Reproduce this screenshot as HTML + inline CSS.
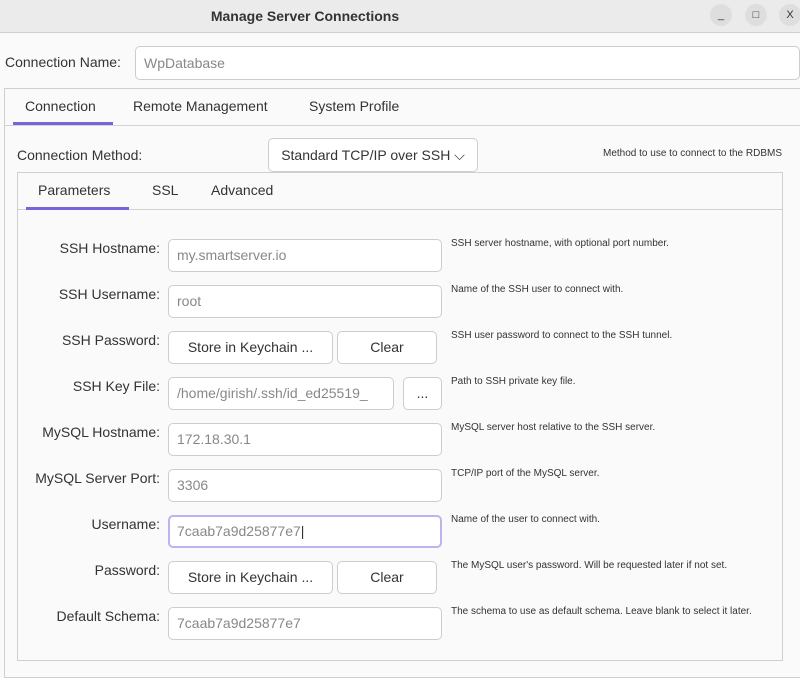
<!DOCTYPE html><html><head><style>
*{box-sizing:border-box}body{margin:0;width:800px;height:675px;background:#fafafa;font-family:"Liberation Sans",sans-serif;color:#333;position:relative;overflow:hidden;font-size:14px}
.a{position:absolute}
.tb{left:0;top:0;width:800px;height:33px;background:#ebebeb;border-bottom:1px solid #cfcfcf}
.c{width:22px;height:22px;border-radius:11px;background:#dedede;top:4px;font-size:11px;text-align:center;line-height:22px;color:#333}
.in{background:#fff;border:1px solid #cdcdcd;border-radius:5px;height:33px;color:#888;padding-left:8px;line-height:31px;font-size:14px}
.bt{background:#fff;border:1px solid #cdcdcd;border-radius:5px;height:33px;text-align:center;line-height:31px;color:#333}
.lb{right:640px;text-align:right;white-space:nowrap}
.d{left:451px;font-size:10px;color:#333;white-space:nowrap}
.u{height:3px;background:#7764d8}
</style></head><body>
<div class="a tb"></div>
<div class="a" style="left:0;width:610px;top:8px;text-align:center;font-weight:bold;font-size:14px">Manage Server Connections</div>
<div class="a c" style="left:710px">_</div><div class="a c" style="left:745px">□</div><div class="a c" style="left:779px">X</div>
<div class="a" style="left:5px;top:54px">Connection Name:</div>
<div class="a in" style="left:135px;top:46px;width:665px;height:34px;line-height:32px">WpDatabase</div>
<div class="a" style="left:4px;top:88px;width:800px;height:590px;border:1px solid #cfcfcf;border-right:none"></div>
<div class="a" style="left:4px;top:125px;width:796px;border-top:1px solid #d3d3d3"></div>
<div class="a" style="left:25px;top:98px">Connection</div>
<div class="a" style="left:133px;top:98px">Remote Management</div>
<div class="a" style="left:309px;top:98px">System Profile</div>
<div class="a u" style="left:13px;top:122px;width:100px"></div>
<div class="a" style="left:17px;top:147px">Connection Method:</div>
<div class="a bt" style="left:268px;top:138px;width:210px;height:34px;line-height:32px">Standard TCP/IP over SSH ⌵</div>
<div class="a" style="right:18px;top:148px;font-size:10px">Method to use to connect to the RDBMS</div>
<div class="a" style="left:17px;top:172px;width:766px;height:489px;border:1px solid #cfcfcf;background:#fafafa"></div>
<div class="a" style="left:18px;top:209px;width:764px;border-top:1px solid #d3d3d3"></div>
<div class="a" style="left:38px;top:182px">Parameters</div>
<div class="a" style="left:152px;top:182px">SSL</div>
<div class="a" style="left:211px;top:182px">Advanced</div>
<div class="a u" style="left:26px;top:207px;width:103px"></div>

<div class="a lb" style="top:239px">SSH Hostname:</div><div class="a in" style="left:168px;top:239px;width:274px">my.smartserver.io</div><div class="a d" style="top:238px">SSH server hostname, with  optional port number.</div>
<div class="a lb" style="top:285px">SSH Username:</div><div class="a in" style="left:168px;top:285px;width:274px">root</div><div class="a d" style="top:284px">Name of the SSH user to connect with.</div>
<div class="a lb" style="top:331px">SSH Password:</div><div class="a bt" style="left:168px;top:331px;width:165px">Store in Keychain ...</div><div class="a bt" style="left:337px;top:331px;width:100px">Clear</div><div class="a d" style="top:330px">SSH user password to connect to the SSH tunnel.</div>
<div class="a lb" style="top:377px">SSH Key File:</div><div class="a in" style="left:168px;top:377px;width:226px;overflow:hidden;white-space:nowrap">/home/girish/.ssh/id_ed25519_</div><div class="a bt" style="left:403px;top:377px;width:39px">...</div><div class="a d" style="top:376px">Path to SSH private key file.</div>
<div class="a lb" style="top:423px">MySQL Hostname:</div><div class="a in" style="left:168px;top:423px;width:274px">172.18.30.1</div><div class="a d" style="top:422px">MySQL server host relative to the SSH server.</div>
<div class="a lb" style="top:469px">MySQL Server Port:</div><div class="a in" style="left:168px;top:469px;width:274px">3306</div><div class="a d" style="top:468px">TCP/IP port of the MySQL server.</div>
<div class="a lb" style="top:515px">Username:</div><div class="a in" style="left:168px;top:515px;width:274px;border:2px solid #bdb3ef;line-height:29px;padding-left:7px">7caab7a9d25877e7<span style="color:#333">|</span></div><div class="a d" style="top:514px">Name of the user to connect with.</div>
<div class="a lb" style="top:561px">Password:</div><div class="a bt" style="left:168px;top:561px;width:165px">Store in Keychain ...</div><div class="a bt" style="left:337px;top:561px;width:100px">Clear</div><div class="a d" style="top:560px">The MySQL user's password. Will be requested later if not set.</div>
<div class="a lb" style="top:607px">Default Schema:</div><div class="a in" style="left:168px;top:607px;width:274px">7caab7a9d25877e7</div><div class="a d" style="top:606px">The schema to use as default schema. Leave blank to select it later.</div>
<style>.lb{margin-top:1px;line-height:17px}</style>
</body></html>
